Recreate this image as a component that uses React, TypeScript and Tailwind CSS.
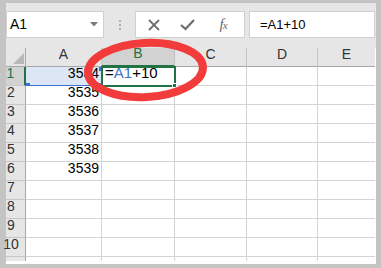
import React from "react";

const cols = ["A", "B", "C", "D", "E"];
const values: Record<number, string> = {
  1: "3534",
  2: "3535",
  3: "3536",
  4: "3537",
  5: "3538",
  6: "3539",
};
const green = "#217346";

function Corner({ className }: { className: string }) {
  return <span className={`absolute w-[4px] h-[4px] bg-[#3b6fd0] ${className}`} />;
}

export default function App() {
  const rows = Array.from({ length: 10 }, (_, i) => i + 1);

  return (
    <div
      className="relative w-[381px] h-[268px] bg-[#c4c4c4] pt-[3px] pl-[6px] pr-[5px] pb-[4px] overflow-hidden"
      style={{ fontFamily: '"Liberation Sans", Arial, sans-serif' }}
    >
      <div className="flex flex-col h-full bg-white">
        {/* formula bar */}
        <div className="h-[45px] shrink-0 bg-[#e6e6e6] flex items-start pt-[8px]">
          <div className="w-[98px] h-[27px] bg-white border border-[#d0d0d0] flex items-center justify-between pl-[3px] pr-[5px]">
            <span className="text-[14px] text-black">A1</span>
            <svg width="8" height="5" viewBox="0 0 8 5">
              <path d="M0 0 L8 0 L4 4.5 Z" fill="#7a7a7a" />
            </svg>
          </div>
          <div className="w-[31px] h-[27px] flex flex-col items-center justify-center gap-[2px]">
            <span className="w-[2px] h-[2px] bg-[#b0b0b0]" />
            <span className="w-[2px] h-[2px] bg-[#b0b0b0]" />
            <span className="w-[2px] h-[2px] bg-[#b0b0b0]" />
          </div>
          <div className="w-[110px] h-[27px] bg-white border border-[#d0d0d0] flex items-center">
            <div className="w-[36px] flex justify-center">
              <svg width="14" height="14" viewBox="0 0 14 14">
                <path d="M2 2 L12 12 M12 2 L2 12" stroke="#6e6e6e" strokeWidth="1.8" />
              </svg>
            </div>
            <div className="w-[30px] flex justify-center">
              <svg width="15" height="13" viewBox="0 0 15 13">
                <path d="M1 7 L5.5 11 L14 2" stroke="#6e6e6e" strokeWidth="2.2" fill="none" />
              </svg>
            </div>
            <div className="flex-1 flex justify-center">
              <span
                className="italic text-[15px] text-[#6a6a6a] tracking-[-1px]"
                style={{ fontFamily: '"Liberation Serif", serif' }}
              >
                f<span className="text-[11px]">x</span>
              </span>
            </div>
          </div>
          <div className="flex-1 ml-[4px] mr-[1px] h-[27px] bg-white border border-[#d0d0d0] flex items-center pl-[10px]">
            <span className="text-[13px] text-black">=A1+10</span>
          </div>
        </div>

        {/* grid */}
        <div className="grid grid-cols-[20px_76px_73px_72px_71px_57px] grid-rows-[19px_repeat(10,19px)_4px] shrink-0">
          <div className="bg-[#e6e6e6] border-r border-b border-[#a8a8a8] relative">
            <svg className="absolute left-[7px] top-[5px]" width="11" height="11" viewBox="0 0 11 11">
              <path d="M11 0 L11 11 L0 11 Z" fill="#b8b8b8" />
            </svg>
          </div>
          {cols.map((c, i) => {
            const sel = c === "B";
            return (
              <div
                key={c}
                className={`flex items-end justify-center pb-[1px] text-[14px] border-b ${
                  i < 4 ? "border-r" : ""
                } ${
                  sel
                    ? "bg-[#d2d2d2] border-b-2 border-b-[#217346] text-[#217346] border-r-[#c0c0c0]"
                    : "bg-[#e6e6e6] text-[#333] border-b-[#a8a8a8] border-r-[#c6c6c6]"
                }`}
              >
                {c}
              </div>
            );
          })}

          {rows.map((r) => (
            <React.Fragment key={r}>
              <div
                className={`flex items-end justify-center pr-[9px] pb-[1px] text-[14px] border-b border-b-[#c6c6c6] ${
                  r === 1
                    ? "bg-[#d2d2d2] text-[#217346] border-r-2 border-r-[#217346]"
                    : "bg-[#e6e6e6] text-[#333] border-r border-r-[#a8a8a8]"
                }`}
              >
                {r}
              </div>
              {cols.map((c, i) => {
                if (c === "A") {
                  return (
                    <div
                      key={c}
                      className={`relative flex items-end justify-end pr-[2px] pb-[1px] text-[14px] text-black border-r border-b border-[#d4d4d4] ${
                        r === 1 ? "bg-[#dce6f4]" : "bg-white"
                      }`}
                    >
                      {values[r]}
                      {r === 1 && (
                        <>
                          <span className="absolute left-0 right-[-1px] bottom-[-1px] h-[1px] bg-[#3b6fd0]" />
                          <Corner className="left-[0px] bottom-[-2px]" />
                          <Corner className="right-[-2px] bottom-[-2px]" />
                          <Corner className="right-[-2px] top-[0px]" />
                        </>
                      )}
                    </div>
                  );
                }
                if (c === "B" && r === 1) {
                  return (
                    <div
                      key={c}
                      className="relative flex items-end pl-[3px] pb-[1px] text-[15px] border-r border-b border-[#d4d4d4] bg-white"
                    >
                      <span className="text-black">=</span>
                      <span className="text-[#4472c4]">A1</span>
                      <span className="text-black">+10</span>
                      <span
                        className="absolute left-[-1px] top-[-1px] w-[75px] h-[21px] border-2"
                        style={{ borderColor: green }}
                      />
                      <span
                        className="absolute right-[-3px] bottom-[-3px] w-[5px] h-[5px] border border-white"
                        style={{ backgroundColor: green }}
                      />
                    </div>
                  );
                }
                return (
                  <div
                    key={c}
                    className={`bg-white border-b border-[#d4d4d4] ${i < 4 ? "border-r" : ""}`}
                  />
                );
              })}
            </React.Fragment>
          ))}

          <div className="bg-[#e6e6e6] border-r border-[#a8a8a8]" />
          {cols.map((c, i) => (
            <div key={c} className={`bg-white ${i < 4 ? "border-r border-[#d4d4d4]" : ""}`} />
          ))}
        </div>
      </div>

      {/* red annotation ellipse */}
      <svg className="absolute left-0 top-0 pointer-events-none" width="381" height="268" viewBox="0 0 381 268">
        <ellipse
          cx="145.5"
          cy="70"
          rx="57.5"
          ry="27"
          transform="rotate(-3 145.5 70)"
          fill="none"
          stroke="#f23b3b"
          strokeWidth="8"
        />
      </svg>
    </div>
  );
}
